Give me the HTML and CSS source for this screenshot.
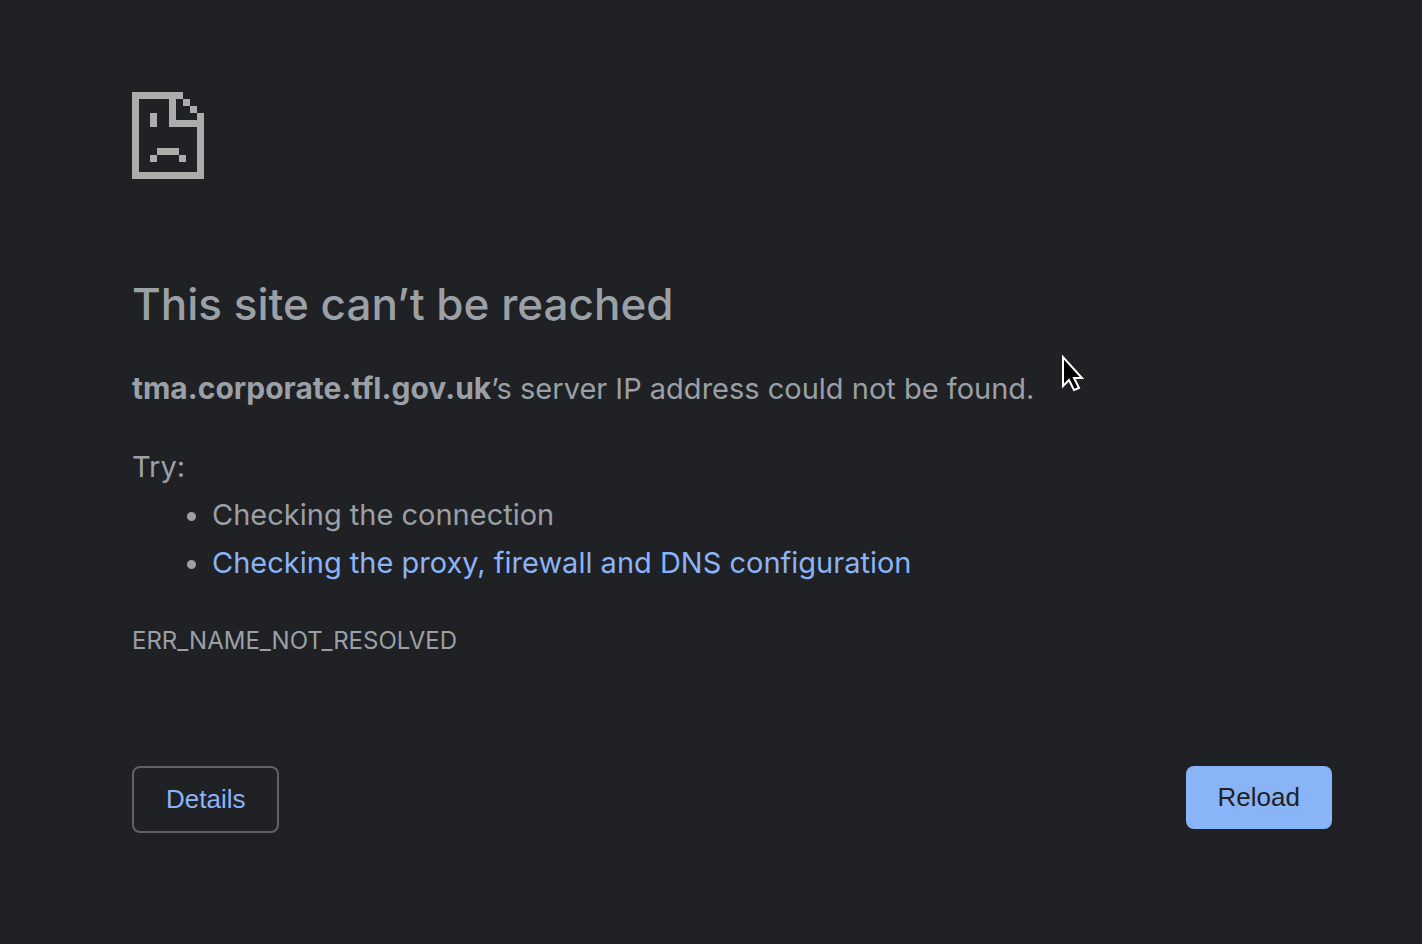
FILE: index.html
```html
<!DOCTYPE html>
<html lang="en">
<head>
<meta charset="utf-8">
<meta name="viewport" content="width=device-width, initial-scale=1">
<title>This site can’t be reached</title>
<link rel="stylesheet" href="styles.css">
</head>
<body>
<main class="page">
  <svg class="sad-page" viewBox="0 0 72 87" shape-rendering="crispEdges" aria-hidden="true">
    <path fill="#acacac" fill-rule="evenodd" d="M0 0H51V7H58V14H65V21H72V87H0ZM7 7V80H65V35H37V7Z"/>
    <path fill="#acacac" d="M18 21h7v14h-7zM25 56h22v7h-22zM18 63h7v7h-7zM47 63h7v7h-7z"/>
    <path fill="#202124" d="M44 7h7v7h7v7h7v7h-21z"/>
  </svg>
  <h1 class="title">This site can’t be reached</h1>
  <p class="summary"><strong class="host">tma.corporate.tfl.gov.uk</strong>’s server IP address could not be found.</p>
  <section class="suggestions">
    <p class="lead">Try:</p>
    <ul class="list">
      <li>Checking the connection</li>
      <li><a class="link" href="#">Checking the proxy, firewall and DNS configuration</a></li>
    </ul>
  </section>
  <p class="code">ERR_NAME_NOT_RESOLVED</p>
  <div class="actions">
    <button class="button details" type="button">Details</button>
    <button class="button reload" type="button">Reload</button>
  </div>
</main>
<svg class="pointer" viewBox="0 0 26 40" aria-hidden="true">
  <path d="M3 3V32L9 26L14 36L19 34L14 24H22Z" fill="#000" stroke="#fff" stroke-width="2"/>
</svg>
</body>
</html>
```

FILE: styles.css
```css
body {
  margin: 0;
  background: #202124;
  color: #9aa0a6;
  font-family: Inter, sans-serif;
  font-size: 29px;
  line-height: 48px;
}
.page {
  max-width: 1200px;
  margin: 0 auto;
  padding: 92px 90px 0 132px;
}
.sad-page {
  display: block;
  width: 72px;
  height: 87px;
}
.title {
  margin: 96px 0 0;
  font-size: 44px;
  font-weight: 500;
  line-height: 58px;
}
.summary {
  margin: 32px 0 0;
}
.host {
  font-size: 30px;
  line-height: 1;
}
.suggestions {
  margin-top: 30px;
}
.lead {
  margin: 0;
}
.list {
  margin: 0;
  padding-left: 80px;
}
.link {
  color: #8ab4f8;
  text-decoration: none;
}
.code {
  margin: 30px 0 0;
  font-size: 24px;
}
.actions {
  display: flex;
  justify-content: space-between;
  align-items: flex-start;
  margin-top: 101px;
}
.button {
  padding: 16px 32px;
  border: 0;
  border-radius: 8px;
  font-family: "Liberation Sans", Arial, sans-serif;
  font-size: 26px;
  line-height: 31px;
  cursor: pointer;
}
.details {
  border: 2px solid #5f6368;
  background: transparent;
  color: #8ab4f8;
}
.reload {
  background: #8ab4f8;
  color: #202124;
}
.pointer {
  position: absolute;
  left: 1060px;
  top: 354px;
  width: 26px;
  height: 40px;
}
```
